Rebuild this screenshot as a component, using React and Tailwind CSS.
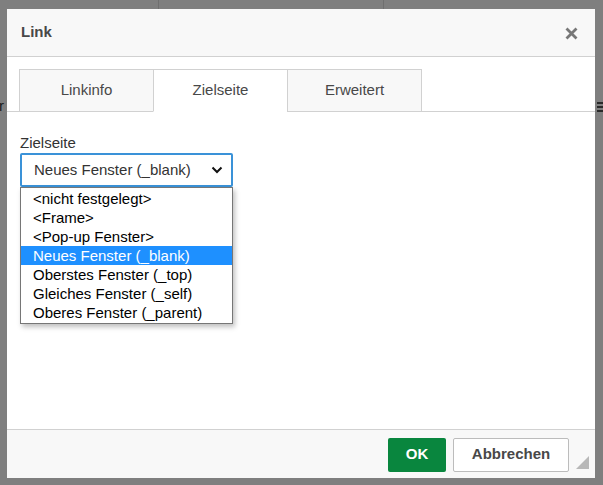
import { useState } from 'react';

const OPTIONS = [
  '<nicht festgelegt>',
  '<Frame>',
  '<Pop-up Fenster>',
  'Neues Fenster (_blank)',
  'Oberstes Fenster (_top)',
  'Gleiches Fenster (_self)',
  'Oberes Fenster (_parent)',
];

const TABS = ['Linkinfo', 'Zielseite', 'Erweitert'];

const App = () => {
  const [tab, setTab] = useState('Zielseite');
  const [selected, setSelected] = useState(3);

  return (
    <div
      className="relative w-[603px] h-[485px] overflow-hidden bg-[#7f7f7f]"
      style={{ fontFamily: '"Liberation Sans", Arial, sans-serif' }}
    >
      {/* editor behind the overlay */}
      <div className="absolute left-[158px] top-0 h-[9px] w-px bg-[#6f6f6f]" />
      <div className="absolute left-[383px] top-0 h-[9px] w-px bg-[#6f6f6f]" />
      <div className="absolute left-[-1px] top-[95px] text-[15px] text-[#1a1a1a]">r</div>
      <div className="absolute left-[597px] top-[102px] flex flex-col gap-[2px]">
        <div className="h-[2px] w-[6px] bg-[#2a2a2a]" />
        <div className="h-[2px] w-[6px] bg-[#2a2a2a]" />
        <div className="h-[2px] w-[6px] bg-[#2a2a2a]" />
      </div>

      {/* dialog */}
      <div className="relative ml-[7px] mt-[9px] flex h-[469px] w-[588px] flex-col bg-white">
        {/* header */}
        <div className="flex h-[48px] shrink-0 items-center justify-between border-b border-[#d1d1d1] bg-[#f8f8f8] pl-[14px] pr-[17px]">
          <span className="text-[15px] font-bold text-[#484848]">Link</span>
          <svg width="13" height="13" viewBox="0 0 13 13" className="mt-[2px]">
            <path d="M1.5 1.5 L11.5 11.5 M11.5 1.5 L1.5 11.5" stroke="#777" strokeWidth="2.8" strokeLinecap="butt" />
          </svg>
        </div>

        {/* body */}
        <div className="flex-1 pt-[12px]">
          <div className="flex border-b border-[#d1d1d1] pl-[12px]">
            {TABS.map((t, i) => (
              <button
                key={t}
                onClick={() => setTab(t)}
                className={`-mb-px flex h-[43px] w-[135px] items-center justify-center border border-[#d1d1d1] text-[15px] text-[#484848] ${
                  i > 0 ? '-ml-px' : ''
                } ${tab === t ? 'border-b-white bg-white' : 'bg-[#f8f8f8]'}`}
              >
                {t}
              </button>
            ))}
          </div>

          <div className="px-[13px] pt-[22px]">
            <div className="text-[15px] leading-[17px] text-[#333]">Zielseite</div>
            <div className="relative mt-[2px] w-[213px]">
              <div className="flex h-[34px] items-center justify-between rounded-[2px] border-2 border-[#3a92d8] pl-[12px] pr-[8px] text-[15px] text-[#333]">
                <span>{OPTIONS[selected]}</span>
                <svg width="12" height="8" viewBox="0 0 12 8">
                  <path d="M1.5 1.5 L6 6 L10.5 1.5" fill="none" stroke="#111" strokeWidth="2" />
                </svg>
              </div>
              <ul className="absolute left-0 top-[34px] w-[213px] border border-[#767676] bg-white py-[1px] shadow-[2px_3px_5px_rgba(0,0,0,0.25)]">
                {OPTIONS.map((o, i) => (
                  <li
                    key={o}
                    onClick={() => setSelected(i)}
                    className={`h-[19px] pl-[12px] text-[15px] leading-[19px] ${
                      i === selected ? 'bg-[#1e90ff] text-white' : 'text-black'
                    }`}
                  >
                    {o}
                  </li>
                ))}
              </ul>
            </div>
          </div>
        </div>

        {/* footer */}
        <div className="relative flex h-[49px] shrink-0 items-center justify-end gap-[7px] border-t border-[#d1d1d1] bg-[#f8f8f8] pr-[26px] pt-[1px]">
          <button className="h-[34px] w-[58px] rounded-[2px] bg-[#09863e] text-[15px] font-bold text-white">OK</button>
          <button className="h-[34px] w-[116px] rounded-[2px] border border-[#bcbcbc] bg-white text-[15px] font-bold text-[#484848]">
            Abbrechen
          </button>
          <svg width="13" height="13" viewBox="0 0 13 13" className="absolute bottom-[9px] right-[6px]">
            <path d="M13 0 L13 13 L0 13 Z" fill="#b8b8b8" />
          </svg>
        </div>
      </div>
    </div>
  );
};

export default App;
